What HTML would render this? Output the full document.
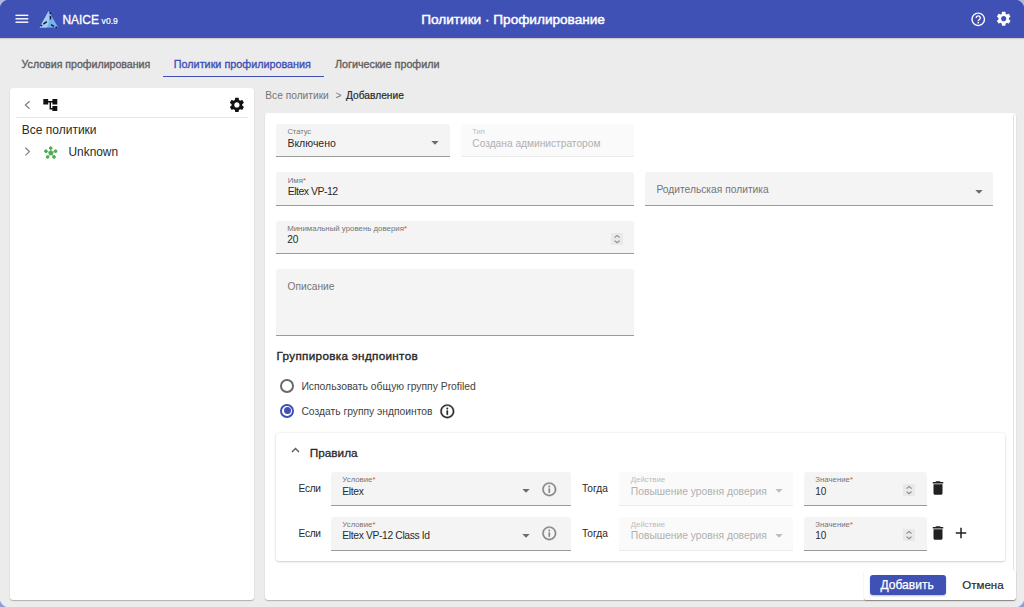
<!DOCTYPE html>
<html><head><meta charset="utf-8"><style>
html,body{margin:0;padding:0;width:1024px;height:607px;overflow:hidden;background:#ececec;font-family:"Liberation Sans",sans-serif}
.t{position:absolute;line-height:1;white-space:nowrap}
.r{position:absolute;display:block}
</style></head><body>
<div class="r" style="left:0px;top:0px;width:1024px;height:38px;background:#3f51b5;box-shadow:0 1px 1px rgba(0,0,0,.12)"></div>
<svg class="r" style="left:15px;top:14px;" width="14" height="10" viewBox="0 0 14 10"><g fill="#fff"><rect x="0.5" y="0.65" width="12.8" height="1.4"/><rect x="0.5" y="4.1" width="12.8" height="1.4"/><rect x="0.5" y="7.5" width="12.8" height="1.4"/></g></svg>
<svg class="r" style="left:38px;top:10px;" width="22" height="19" viewBox="0 0 22 19"><polygon points="10.65,1 1.6,17.6 20.2,17.6" fill="#74b2f0"/><polygon points="10.65,1 1.6,17.6 9,17.6 11,12" fill="#a3cdf4"/><g stroke="#141a33" stroke-width="1.5" fill="none"><path d="M12.4 2.2 V4 M12.5 6 V9.5"/><path d="M2.6 16.2 L4.2 15 M5.4 14.1 L8.8 11.6"/><path d="M13 14.6 L16 16.3 M17.6 17 L19.2 17.6"/></g></svg>
<div class="t" style="left:62.5px;top:15px;font-size:11.9px;color:#fff;-webkit-text-stroke:0.3px #fff">NAICE</div>
<div class="t" style="left:101.6px;top:17px;font-size:8.6px;color:#fff;-webkit-text-stroke:0.2px #fff">v0.9</div>
<div class="t" style="left:421.3px;top:13px;font-size:13.6px;color:#fff;-webkit-text-stroke:0.45px #fff">Политики · Профилирование</div>
<svg class="r" style="left:970.05px;top:10.75px;" width="16.5" height="16.5" viewBox="0 0 24 24"><path fill="#fff" d="M11 18h2v-2h-2v2zm1-16C6.48 2 2 6.48 2 12s4.48 10 10 10 10-4.48 10-10S17.52 2 12 2zm0 18c-4.41 0-8-3.59-8-8s3.59-8 8-8 8 3.59 8 8-3.59 8-8 8zm0-14c-2.21 0-4 1.79-4 4h2c0-1.1.9-2 2-2s2 .9 2 2c0 2-3 1.75-3 5h2c0-2.25 3-2.5 3-5 0-2.21-1.79-4-4-4z"/></svg>
<svg class="r" style="left:995.2px;top:10.2px;" width="17.4" height="17.4" viewBox="0 0 24 24"><path fill="#fff" d="M19.14 12.94c.04-.3.06-.61.06-.94 0-.32-.02-.64-.07-.94l2.03-1.58c.18-.14.23-.41.12-.61l-1.92-3.32c-.12-.22-.37-.29-.59-.22l-2.39.96c-.5-.38-1.03-.7-1.62-.94l-.36-2.54c-.04-.24-.24-.41-.48-.41h-3.84c-.24 0-.43.17-.47.41l-.36 2.54c-.59.24-1.13.57-1.62.94l-2.39-.96c-.22-.08-.47 0-.59.22L2.74 8.87c-.12.21-.08.47.12.61l2.03 1.58c-.05.3-.09.63-.09.94s.02.64.07.94l-2.030 1.58c-.18.14-.23.41-.12.61l1.92 3.32c.12.22.37.29.59.22l2.39-.96c.5.38 1.03.7 1.62.94l.36 2.54c.05.24.24.41.48.41h3.84c.24 0 .44-.17.47-.41l.36-2.54c.59-.24 1.13-.56 1.62-.94l2.39.96c.22.08.47 0 .59-.22l1.92-3.32c.12-.22.07-.47-.12-.61l-2.01-1.58zM12 15.6c-1.98 0-3.6-1.62-3.6-3.6s1.62-3.6 3.6-3.6 3.6 1.62 3.6 3.6-1.62 3.6-3.6 3.6z"/></svg>
<div class="t" style="left:21.6px;top:59px;font-size:10.6px;color:#616161;-webkit-text-stroke:0.35px #616161">Условия профилирования</div>
<div class="t" style="left:173.8px;top:59px;font-size:10.8px;color:#3f51b5;-webkit-text-stroke:0.35px #3f51b5">Политики профилирования</div>
<div class="t" style="left:335.0px;top:59px;font-size:10.75px;color:#616161;-webkit-text-stroke:0.35px #616161">Логические профили</div>
<div class="r" style="left:163px;top:75.8px;width:160.5px;height:1.6000000000000085px;background:#3f51b5"></div>
<div class="r" style="left:10px;top:88px;width:244px;height:512px;background:#fff;border-radius:3px;box-shadow:0 1px 1px 0 rgba(0,0,0,.2),0 1px 2px 0 rgba(0,0,0,.06),0 0 1px 0 rgba(0,0,0,.06)"></div>
<svg class="r" style="left:22px;top:97px;" width="11" height="15" viewBox="0 0 11 15"><path d="M7.6 4.2 L3.4 8 L7.6 11.8" stroke="#808080" stroke-width="1.25" fill="none"/></svg>
<svg class="r" style="left:43.2px;top:98.6px;" width="14.6" height="12.6" viewBox="2 3 20 18"><path fill="#111" d="M22 11V3h-7v3H9V3H2v8h7V8h2v10h4v3h7v-8h-7v3h-2V8h2v3z"/></svg>
<svg class="r" style="left:227.95px;top:96.1px;" width="17.8" height="17.8" viewBox="0 0 24 24"><path fill="#111" d="M19.14 12.94c.04-.3.06-.61.06-.94 0-.32-.02-.64-.07-.94l2.03-1.58c.18-.14.23-.41.12-.61l-1.92-3.32c-.12-.22-.37-.29-.59-.22l-2.39.96c-.5-.38-1.03-.7-1.62-.94l-.36-2.54c-.04-.24-.24-.41-.48-.41h-3.84c-.24 0-.43.17-.47.41l-.36 2.54c-.59.24-1.13.57-1.62.94l-2.39-.96c-.22-.08-.47 0-.59.22L2.74 8.87c-.12.21-.08.47.12.61l2.03 1.58c-.05.3-.09.63-.09.94s.02.64.07.94l-2.030 1.58c-.18.14-.23.41-.12.61l1.92 3.32c.12.22.37.29.59.22l2.39-.96c.5.38 1.03.7 1.62.94l.36 2.54c.05.24.24.41.48.41h3.84c.24 0 .44-.17.47-.41l.36-2.54c.59-.24 1.13-.56 1.62-.94l2.39.96c.22.08.47 0 .59-.22l1.92-3.32c.12-.22.07-.47-.12-.61l-2.01-1.58zM12 15.6c-1.98 0-3.6-1.62-3.6-3.6s1.62-3.6 3.6-3.6 3.6 1.62 3.6 3.6-1.62 3.6-3.6 3.6z"/></svg>
<div class="r" style="left:16px;top:117px;width:232px;height:1px;background:#e6e6e6"></div>
<div class="t" style="left:21.8px;top:124px;font-size:12.0px;color:#2a2a2a">Все политики</div>
<svg class="r" style="left:22px;top:145px;" width="11" height="13" viewBox="0 0 11 13"><path d="M3.4 2.8 L7.4 6.6 L3.4 10.4" stroke="#808080" stroke-width="1.25" fill="none"/></svg>
<svg class="r" style="left:44px;top:145.5px;" width="13.5" height="13" viewBox="0 0 13.5 13"><g fill="#4caf50" stroke="#4caf50"><circle cx="6.9" cy="7" r="2.0"/><circle cx="6.7" cy="2.1" r="1.35"/><circle cx="1.9" cy="5.2" r="1.35"/><circle cx="11.6" cy="5.2" r="1.35"/><circle cx="3.6" cy="11" r="1.35"/><circle cx="10" cy="11" r="1.35"/><g stroke-width="0.9"><line x1="6.7" y1="2.1" x2="6.9" y2="7"/><line x1="1.9" y1="5.2" x2="6.9" y2="7"/><line x1="11.6" y1="5.2" x2="6.9" y2="7"/><line x1="3.6" y1="11" x2="6.9" y2="7"/><line x1="10" y1="11" x2="6.9" y2="7"/></g></g></svg>
<div class="t" style="left:68.5px;top:147px;font-size:11.9px;color:#2a2a2a">Unknown</div>
<div class="t" style="left:265.3px;top:91px;font-size:10.2px;color:#757575">Все политики</div>
<div class="t" style="left:335.6px;top:91px;font-size:10.2px;color:#757575">&gt;</div>
<div class="t" style="left:346.1px;top:91px;font-size:10.2px;color:#2a2a2a;-webkit-text-stroke:0.2px #2a2a2a">Добавление</div>
<div class="r" style="left:265px;top:113px;width:750.5px;height:487px;background:#fff;border-radius:3px;box-shadow:0 1px 1px 0 rgba(0,0,0,.2),0 1px 2px 0 rgba(0,0,0,.06),0 0 1px 0 rgba(0,0,0,.06)"></div>
<div class="r" style="left:1013px;top:114.5px;width:1.2999999999999545px;height:485.5px;background:#e2e2e2"></div>
<div class="r" style="left:276px;top:124px;width:174px;height:33px;background:#f4f4f4;border-radius:3px 3px 0 0;border-bottom:1px solid #9a9a9a;box-sizing:border-box"></div>
<div class="t" style="left:287.4px;top:128px;font-size:7.5px;color:#757575">Статус</div>
<div class="t" style="left:287.4px;top:138px;font-size:10.5px;color:#2a2a2a">Включено</div>
<svg class="r" style="left:431.1px;top:141px;" width="8" height="4" viewBox="0 0 8 4"><path d="M0.3 0 L7.7 0 L4 3.8z" fill="#6c6c6c"/></svg>
<div class="r" style="left:461px;top:124px;width:173px;height:33px;background:#fafafa;border-radius:3px 3px 0 0;border-bottom:1px solid #ececec;box-sizing:border-box"></div>
<div class="t" style="left:472.3px;top:128px;font-size:7.5px;color:#bdbdbd">Тип</div>
<div class="t" style="left:472.3px;top:139px;font-size:10.2px;color:#b0b0b0">Создана администратором</div>
<div class="r" style="left:276px;top:172px;width:358px;height:34px;background:#f4f4f4;border-radius:3px 3px 0 0;border-bottom:1px solid #9a9a9a;box-sizing:border-box"></div>
<div class="t" style="left:287.7px;top:177px;font-size:7.8px;color:#757575">Имя<span style="color:#e65100">*</span></div>
<div class="t" style="left:287.7px;top:186px;font-size:10.5px;color:#2a2a2a;letter-spacing:-0.5px">Eltex VP-12</div>
<div class="r" style="left:645px;top:172px;width:348px;height:34px;background:#f4f4f4;border-radius:3px 3px 0 0;border-bottom:1px solid #9a9a9a;box-sizing:border-box"></div>
<div class="t" style="left:656.4px;top:185px;font-size:10.26px;color:#757575">Родительская политика</div>
<svg class="r" style="left:974.8000000000001px;top:190px;" width="8" height="4" viewBox="0 0 8 4"><path d="M0.3 0 L7.7 0 L4 3.8z" fill="#6c6c6c"/></svg>
<div class="r" style="left:276px;top:221px;width:358px;height:33px;background:#f4f4f4;border-radius:3px 3px 0 0;border-bottom:1px solid #9a9a9a;box-sizing:border-box"></div>
<div class="t" style="left:287.2px;top:225px;font-size:7.86px;color:#757575">Минимальный уровень доверия<span style="color:#e65100">*</span></div>
<div class="t" style="left:287.2px;top:235px;font-size:10.2px;color:#2a2a2a">20</div>
<div class="r" style="left:611px;top:233px;width:12px;height:12px;background:#e9e9e9"></div>
<svg class="r" style="left:611px;top:233px;" width="12" height="12" viewBox="0 0 12 12"><path d="M3.6 4.6 L6.1 2.4 L8.6 4.6 M3.6 7.6 L6.1 9.8 L8.6 7.6" stroke="#8a8a8a" stroke-width="1.15" fill="none"/></svg>
<div class="r" style="left:276px;top:269px;width:358px;height:67px;background:#f4f4f4;border-radius:3px 3px 0 0;border-bottom:1px solid #9a9a9a;box-sizing:border-box"></div>
<div class="t" style="left:287.6px;top:282px;font-size:10.2px;color:#757575">Описание</div>
<div class="t" style="left:276.6px;top:350px;font-size:11.7px;color:#2a2a2a;letter-spacing:0.32px;-webkit-text-stroke:0.38px #2a2a2a">Группировка эндпоинтов</div>
<div class="r" style="left:280.2px;top:379.1px;width:13.800000000000011px;height:13.799999999999955px;border:2px solid #6a6a6a;border-radius:50%;box-sizing:border-box"></div>
<div class="t" style="left:301.4px;top:382px;font-size:10.35px;color:#424242">Использовать общую группу Profiled</div>
<div class="r" style="left:280.2px;top:404px;width:13.800000000000011px;height:13.800000000000011px;border:2px solid #3f51b5;border-radius:50%;box-sizing:border-box"></div>
<div class="r" style="left:283.6px;top:407.4px;width:7.0px;height:7.0px;background:#3f51b5;border-radius:50%"></div>
<div class="t" style="left:301.4px;top:407px;font-size:10.3px;color:#424242">Создать группу эндпоинтов</div>
<svg class="r" style="left:438.75px;top:402.55px;" width="16.6" height="16.6" viewBox="0 0 24 24"><path fill="#2a2a2a" stroke="#2a2a2a" stroke-width="0.45" d="M11 7h2v2h-2zm0 4h2v6h-2zm1-9C6.48 2 2 6.48 2 12s4.48 10 10 10 10-4.48 10-10S17.52 2 12 2zm0 18c-4.41 0-8-3.59-8-8s3.59-8 8-8 8 3.59 8 8-3.59 8-8 8z"/></svg>
<div class="r" style="left:276px;top:433px;width:728.5px;height:128px;background:#fff;border-radius:3px;box-shadow:0 0 3px rgba(0,0,0,.1),0 1px 2px rgba(0,0,0,.16)"></div>
<svg class="r" style="left:290px;top:443.6px;" width="11" height="11" viewBox="0 0 11 11"><path d="M2 8 L5.5 4.5 L9 8" stroke="#616161" stroke-width="1.5" fill="none"/></svg>
<div class="t" style="left:309.7px;top:448px;font-size:11.8px;color:#2a2a2a;-webkit-text-stroke:0.3px #2a2a2a">Правила</div>
<div class="t" style="left:298.6px;top:484px;font-size:10.1px;color:#2a2a2a;letter-spacing:-0.3px">Если</div>
<div class="r" style="left:331px;top:472px;width:240px;height:34px;background:#f4f4f4;border-radius:3px 3px 0 0;border-bottom:1px solid #9a9a9a;box-sizing:border-box"></div>
<div class="t" style="left:342.3px;top:476px;font-size:7.8px;color:#757575">Условие<span style="color:#e65100">*</span></div>
<div class="t" style="left:342.3px;top:487px;font-size:10.3px;color:#2a2a2a;letter-spacing:-0.35px">Eltex</div>
<svg class="r" style="left:521.8000000000001px;top:489.3px;" width="8" height="4" viewBox="0 0 8 4"><path d="M0.3 0 L7.7 0 L4 3.8z" fill="#6c6c6c"/></svg>
<svg class="r" style="left:540.6px;top:480.5px;" width="16.6" height="16.6" viewBox="0 0 24 24"><path fill="#858585" stroke="#858585" stroke-width="0.4" d="M11 7h2v2h-2zm0 4h2v6h-2zm1-9C6.48 2 2 6.48 2 12s4.48 10 10 10 10-4.48 10-10S17.52 2 12 2zm0 18c-4.41 0-8-3.59-8-8s3.59-8 8-8 8 3.59 8 8-3.59 8-8 8z"/></svg>
<div class="t" style="left:581.9px;top:484px;font-size:10.2px;color:#2a2a2a">Тогда</div>
<div class="r" style="left:619px;top:472px;width:174px;height:34px;background:#fafafa;border-radius:3px 3px 0 0;border-bottom:1px solid #ececec;box-sizing:border-box"></div>
<div class="t" style="left:630.8px;top:476px;font-size:7.8px;color:#bdbdbd">Действие</div>
<div class="t" style="left:630.8px;top:487px;font-size:10.3px;color:#b0b0b0">Повышение уровня доверия</div>
<svg class="r" style="left:774.6px;top:489.3px;" width="8" height="4" viewBox="0 0 8 4"><path d="M0.3 0 L7.7 0 L4 3.8z" fill="#bdbdbd"/></svg>
<div class="r" style="left:804px;top:472px;width:123px;height:34px;background:#f4f4f4;border-radius:3px 3px 0 0;border-bottom:1px solid #9a9a9a;box-sizing:border-box"></div>
<div class="t" style="left:815.3px;top:476px;font-size:7.8px;color:#757575">Значение<span style="color:#e65100">*</span></div>
<div class="t" style="left:815.3px;top:487px;font-size:10.0px;color:#2a2a2a">10</div>
<div class="r" style="left:903px;top:484px;width:12px;height:12px;background:#e9e9e9"></div>
<svg class="r" style="left:903px;top:484px;" width="12" height="12" viewBox="0 0 12 12"><path d="M3.6 4.6 L6.1 2.4 L8.6 4.6 M3.6 7.6 L6.1 9.8 L8.6 7.6" stroke="#8a8a8a" stroke-width="1.15" fill="none"/></svg>
<svg class="r" style="left:929px;top:479px;" width="18" height="18" viewBox="0 0 24 24"><path fill="#212121" d="M6 19c0 1.1.9 2 2 2h8c1.1 0 2-.9 2-2V7H6v12zM19 4h-3.5l-1-1h-5l-1 1H5v2h14V4z"/></svg>
<div class="t" style="left:298.6px;top:529px;font-size:10.1px;color:#2a2a2a;letter-spacing:-0.3px">Если</div>
<div class="r" style="left:331px;top:516.5px;width:240px;height:34.0px;background:#f4f4f4;border-radius:3px 3px 0 0;border-bottom:1px solid #9a9a9a;box-sizing:border-box"></div>
<div class="t" style="left:342.3px;top:521px;font-size:7.8px;color:#757575">Условие<span style="color:#e65100">*</span></div>
<div class="t" style="left:342.3px;top:531px;font-size:10.3px;color:#2a2a2a;letter-spacing:-0.35px">Eltex VP-12 Class Id</div>
<svg class="r" style="left:521.8000000000001px;top:533.8px;" width="8" height="4" viewBox="0 0 8 4"><path d="M0.3 0 L7.7 0 L4 3.8z" fill="#6c6c6c"/></svg>
<svg class="r" style="left:540.6px;top:525.0px;" width="16.6" height="16.6" viewBox="0 0 24 24"><path fill="#858585" stroke="#858585" stroke-width="0.4" d="M11 7h2v2h-2zm0 4h2v6h-2zm1-9C6.48 2 2 6.48 2 12s4.48 10 10 10 10-4.48 10-10S17.52 2 12 2zm0 18c-4.41 0-8-3.59-8-8s3.59-8 8-8 8 3.59 8 8-3.59 8-8 8z"/></svg>
<div class="t" style="left:581.9px;top:529px;font-size:10.2px;color:#2a2a2a">Тогда</div>
<div class="r" style="left:619px;top:516.5px;width:174px;height:34.0px;background:#fafafa;border-radius:3px 3px 0 0;border-bottom:1px solid #ececec;box-sizing:border-box"></div>
<div class="t" style="left:630.8px;top:521px;font-size:7.8px;color:#bdbdbd">Действие</div>
<div class="t" style="left:630.8px;top:531px;font-size:10.3px;color:#b0b0b0">Повышение уровня доверия</div>
<svg class="r" style="left:774.6px;top:533.8px;" width="8" height="4" viewBox="0 0 8 4"><path d="M0.3 0 L7.7 0 L4 3.8z" fill="#bdbdbd"/></svg>
<div class="r" style="left:804px;top:516.5px;width:123px;height:34.0px;background:#f4f4f4;border-radius:3px 3px 0 0;border-bottom:1px solid #9a9a9a;box-sizing:border-box"></div>
<div class="t" style="left:815.3px;top:521px;font-size:7.8px;color:#757575">Значение<span style="color:#e65100">*</span></div>
<div class="t" style="left:815.3px;top:531px;font-size:10.0px;color:#2a2a2a">10</div>
<div class="r" style="left:903px;top:528.5px;width:12px;height:12.0px;background:#e9e9e9"></div>
<svg class="r" style="left:903px;top:528.5px;" width="12" height="12" viewBox="0 0 12 12"><path d="M3.6 4.6 L6.1 2.4 L8.6 4.6 M3.6 7.6 L6.1 9.8 L8.6 7.6" stroke="#8a8a8a" stroke-width="1.15" fill="none"/></svg>
<svg class="r" style="left:929px;top:524.3px;" width="18" height="18" viewBox="0 0 24 24"><path fill="#212121" d="M6 19c0 1.1.9 2 2 2h8c1.1 0 2-.9 2-2V7H6v12zM19 4h-3.5l-1-1h-5l-1 1H5v2h14V4z"/></svg>
<svg class="r" style="left:952px;top:523.8px;" width="18" height="18" viewBox="0 0 24 24"><path fill="#212121" d="M19 13h-6v6h-2v-6H5v-2h6V5h2v6h6v2z"/></svg>
<div class="r" style="left:864px;top:570px;width:152px;height:30px;background:#fff;border-radius:3px;box-shadow:0 1px 1px 0 rgba(0,0,0,.2),0 1px 2px 0 rgba(0,0,0,.06),0 0 1px 0 rgba(0,0,0,.06)"></div>
<div class="r" style="left:869.5px;top:575px;width:76.0px;height:19.5px;background:#3f51b5;border-radius:3px;box-shadow:0 1px 2px rgba(0,0,0,.25)"></div>
<div class="t" style="left:880.4px;top:579px;font-size:12.1px;color:#fff;-webkit-text-stroke:0.25px #fff">Добавить</div>
<div class="t" style="left:962.3px;top:580px;font-size:11.5px;color:#2a2a2a;-webkit-text-stroke:0.2px #2a2a2a">Отмена</div>
<svg class="r" style="left:0px;top:0px;" width="8" height="8" viewBox="0 0 8 8"><path d="M0 0 H6.4 Q1.6 1.6 0 6.4 Z" fill="#b3b8de" transform="rotate(0 4 4)"/></svg>
<svg class="r" style="left:1016px;top:0px;" width="8" height="8" viewBox="0 0 8 8"><path d="M0 0 H6.4 Q1.6 1.6 0 6.4 Z" fill="#b3b8de" transform="rotate(90 4 4)"/></svg>
<svg class="r" style="left:1016px;top:599px;" width="8" height="8" viewBox="0 0 8 8"><path d="M0 0 H6.4 Q1.6 1.6 0 6.4 Z" fill="#939bd5" transform="rotate(180 4 4)"/></svg>
<svg class="r" style="left:0px;top:599px;" width="8" height="8" viewBox="0 0 8 8"><path d="M0 0 H6.4 Q1.6 1.6 0 6.4 Z" fill="#939bd5" transform="rotate(270 4 4)"/></svg>
</body></html>
